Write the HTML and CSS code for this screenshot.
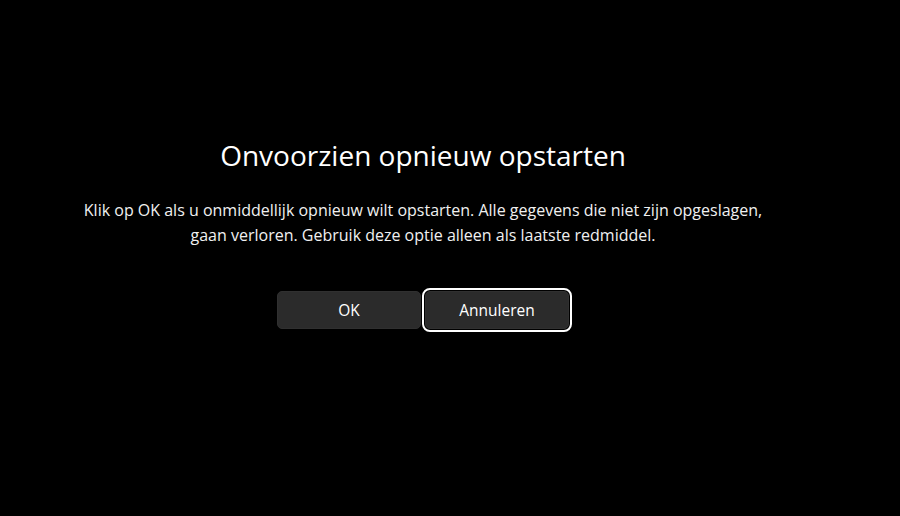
FILE: index.html
```html
<!DOCTYPE html>
<html lang="nl">
<head>
<meta charset="utf-8">
<title>Onvoorzien opnieuw opstarten</title>
<link rel="stylesheet" href="styles.css">
</head>
<body>
<main class="screen">
  <section class="dialog">
    <h1 class="title">Onvoorzien opnieuw opstarten</h1>
    <p class="message">Klik op OK als u onmiddellijk opnieuw wilt opstarten. Alle gegevens die niet zijn opgeslagen,<br>gaan verloren. Gebruik deze optie alleen als laatste redmiddel.</p>
    <div class="actions">
      <button class="btn" type="button">OK</button>
      <button class="btn btn-focus" type="button">Annuleren</button>
    </div>
  </section>
</main>
</body>
</html>
```

FILE: styles.css
```css
html, body {
  margin: 0;
  padding: 0;
  background: #000;
  height: 100%;
}
body {
  font-family: "Open Sans", "Noto Sans", sans-serif;
  color: #fff;
}
.screen {
  width: 846px;
  height: 516px;
}
.dialog {
  display: flex;
  flex-direction: column;
  align-items: center;
  padding-top: 137px;
}
.title {
  margin: 0;
  font-size: 28px;
  font-weight: 530;
  line-height: 36px;
  color: #fff;
}
.message {
  margin: 25px 0 0;
  font-size: 16px;
  line-height: 25px;
  text-align: center;
  color: #f0f0f0;
}
.actions {
  display: flex;
  gap: 4px;
  margin-top: 43px;
}
.btn {
  width: 144px;
  height: 38px;
  border: 1px solid #303030;
  border-radius: 5px;
  background: #2b2b2b;
  color: #fff;
  font-family: "Open Sans", "Noto Sans", sans-serif;
  font-size: 15.5px;
  padding: 0;
}
.btn-focus {
  outline: 2px solid #fff;
  outline-offset: 1px;
}
```
